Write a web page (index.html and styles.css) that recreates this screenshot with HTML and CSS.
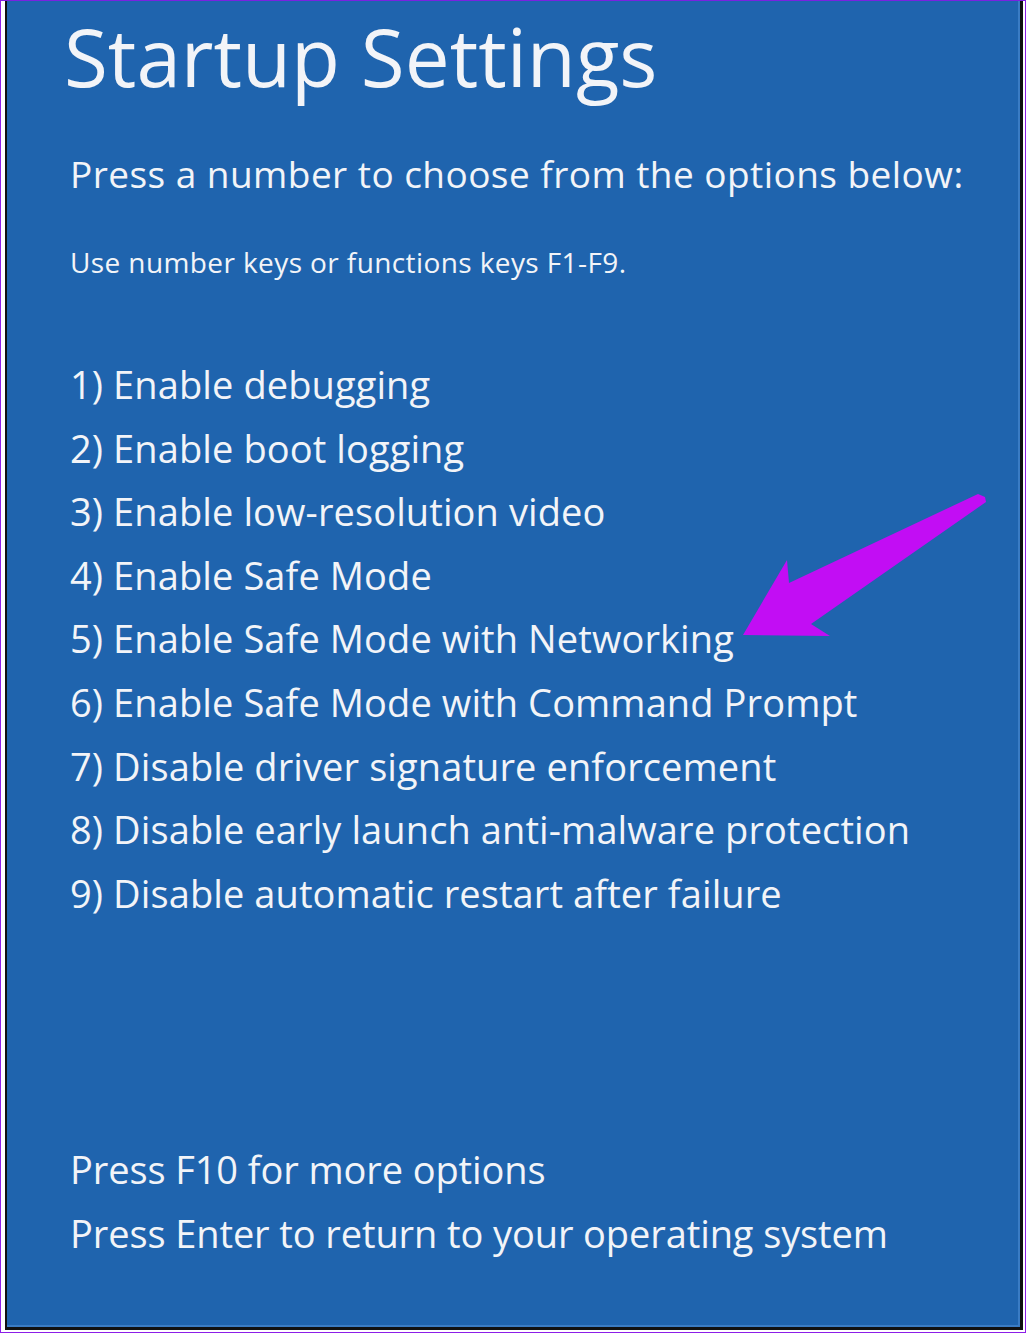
FILE: index.html
```html
<!DOCTYPE html>
<html lang="en">
<head>
    <meta charset="UTF-8">
    <title>Startup Settings</title>
    <link rel="stylesheet" href="styles.css">
</head>
<body>
    <div class="frame">
        <div class="screen">
            <h1>Startup Settings</h1>
            <p class="lead">Press a number to choose from the options below:</p>
            <p class="hint">Use number keys or functions keys F1-F9.</p>

            <ol class="options">
                <li>1) Enable debugging</li>
                <li>2) Enable boot logging</li>
                <li>3) Enable low-resolution video</li>
                <li>4) Enable Safe Mode</li>
                <li>5) Enable Safe Mode with Networking</li>
                <li>6) Enable Safe Mode with Command Prompt</li>
                <li>7) Disable driver signature enforcement</li>
                <li>8) Disable early launch anti-malware protection</li>
                <li>9) Disable automatic restart after failure</li>
            </ol>

            <div class="footer">
                <p>Press F10 for more options</p>
                <p>Press Enter to return to your operating system</p>
            </div>

            <!-- annotation arrow -->
            <svg class="arrow" width="1026" height="1333" viewBox="0 0 1026 1333">
                <polygon points="743,635 787,560 789,583 978,494 985,497 986,502 811,624 830,636" fill="#c20df4" />
            </svg>
        </div>
    </div>
</body>
</html>
```

FILE: styles.css
```css
html, body {
    margin: 0;
    padding: 0;
    background: #fff;
}

.frame {
    box-sizing: border-box;
    width: 1026px;
    height: 1333px;
    border: 1px solid #8c1ee8;
    border-top-color: #7a22e0;
    padding: 0 2px 2px 4px;
}

.screen {
    position: relative;
    box-sizing: border-box;
    height: 100%;
    background: #1f64ae;
    border-left: 2px solid #111;
    border-right: 3px solid #111;
    border-bottom: 3px solid #111;
    box-shadow: inset -2px -2px 0 #3a7cc4;
    color: #f2f4f8;
    font-family: "Open Sans", "Noto Sans", sans-serif;
    padding: 0 0 0 57px;
}

h1 {
    margin: 0;
    font-size: 80px;
    font-weight: 400;
    line-height: 110px;
    letter-spacing: 0;
}

.lead {
    margin: 38px 0 0 6px;
    font-size: 37px;
    line-height: 50px;
    letter-spacing: 0.45px;
}

.hint {
    margin: 43px 0 0 6px;
    font-size: 28px;
    line-height: 40px;
    letter-spacing: 0.4px;
}

.options {
    list-style: none;
    margin: 71px 0 0 6px;
    padding: 0;
}

.options li {
    font-size: 38px;
    line-height: 63.6px;
    letter-spacing: 0.1px;
}

.footer {
    margin-top: 212px;
}

.footer p {
    margin: 0 0 0 6px;
    font-size: 38px;
    line-height: 64px;
    letter-spacing: -0.1px;
}

.arrow {
    position: absolute;
    left: -7px;
    top: -1px;
    pointer-events: none;
}
```
